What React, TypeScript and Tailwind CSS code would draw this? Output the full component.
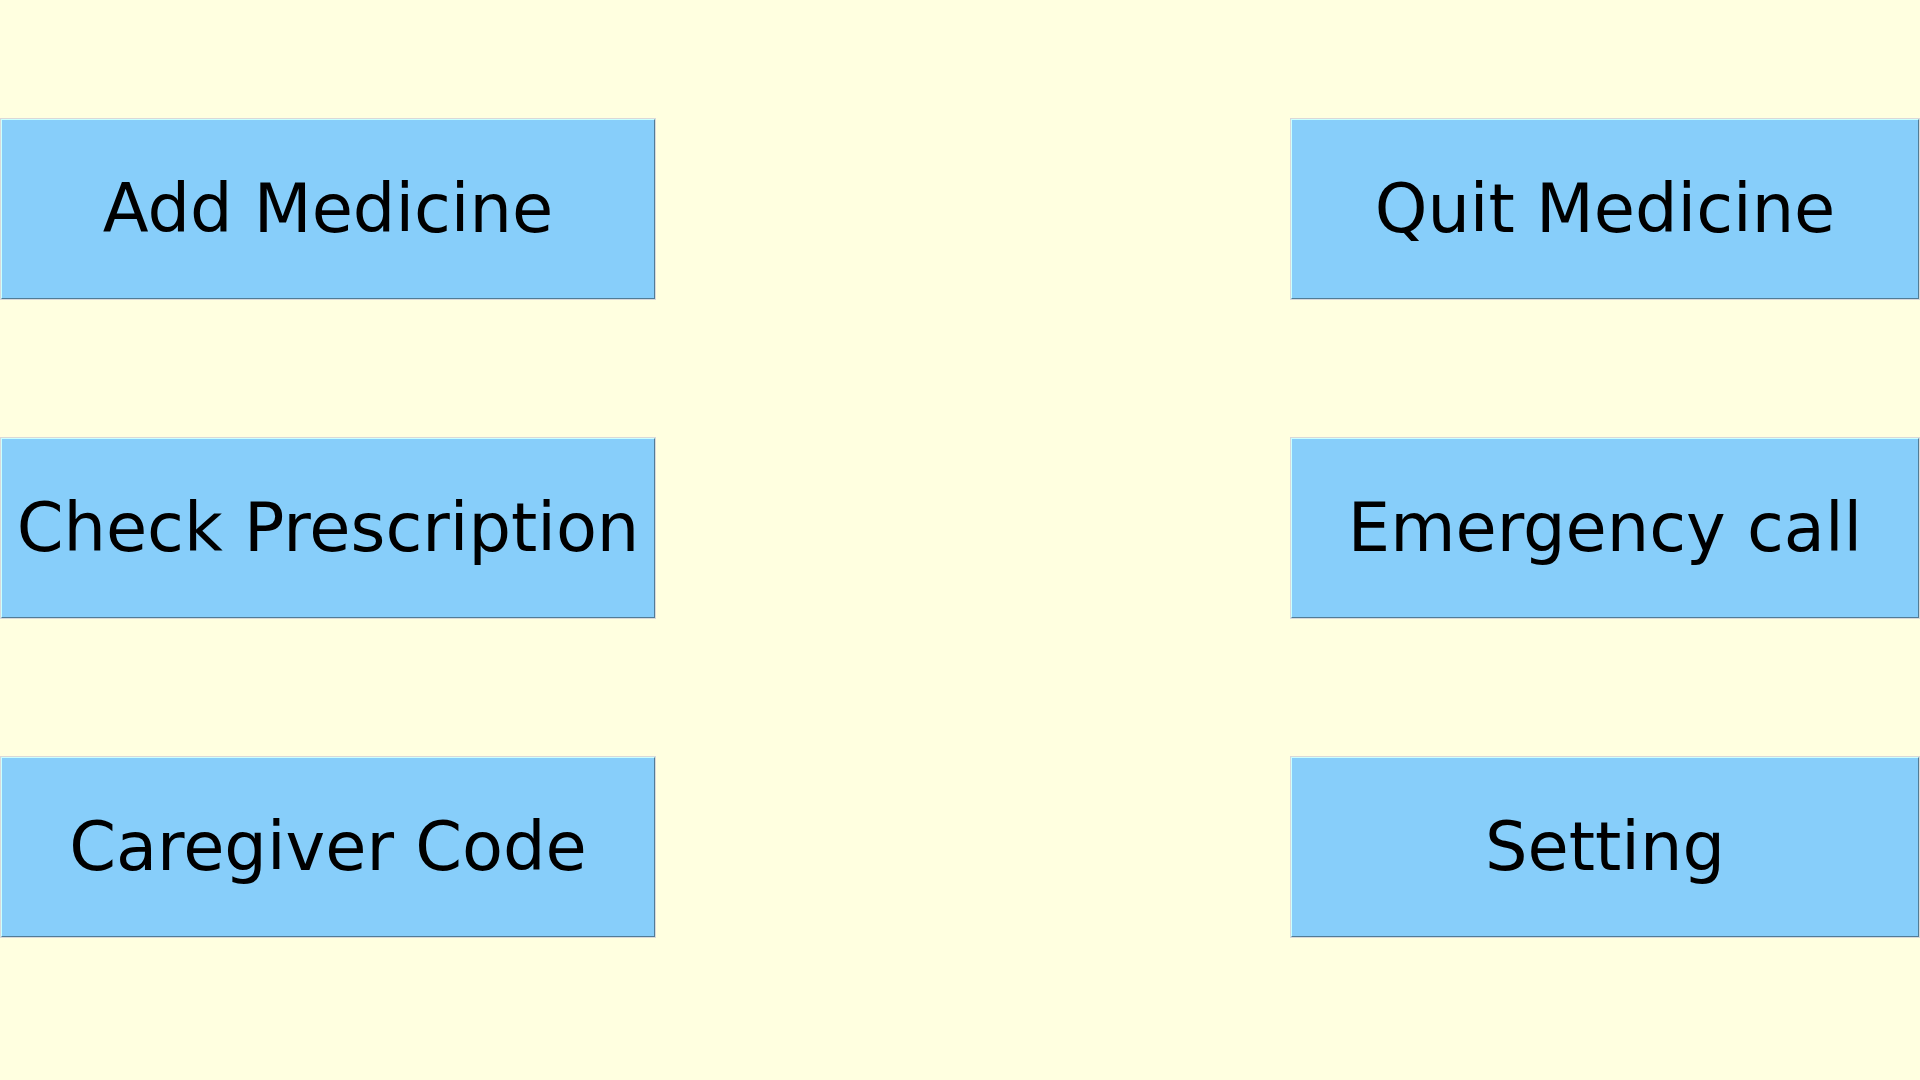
const left = ["Add Medicine", "Check Prescription", "Caregiver Code"];
const right = ["Quit Medicine", "Emergency call", "Setting"];

function MenuButton({ label }: { label: string }) {
  return (
    <button type="button" className="w-full border border-[#d9d9d9] bg-[#87cefa] text-black">
      <span className="block whitespace-nowrap border border-t-[#cbffff] border-r-[#517c96] border-b-[#517c96] border-l-[#cbffff] px-3 py-[50px] text-center text-[67px] leading-[78px]">
        {label}
      </span>
    </button>
  );
}

function Column({ labels }: { labels: string[] }) {
  return (
    <nav className="flex flex-col gap-[137px]">
      {labels.map((label) => (
        <MenuButton key={label} label={label} />
      ))}
    </nav>
  );
}

export default function App() {
  return (
    <main className="grid min-h-screen grid-cols-[656fr_634fr_630fr] bg-[#ffffe0] py-[118px] font-['DejaVu_Sans',sans-serif]">
      <Column labels={left} />
      <div />
      <Column labels={right} />
    </main>
  );
}
